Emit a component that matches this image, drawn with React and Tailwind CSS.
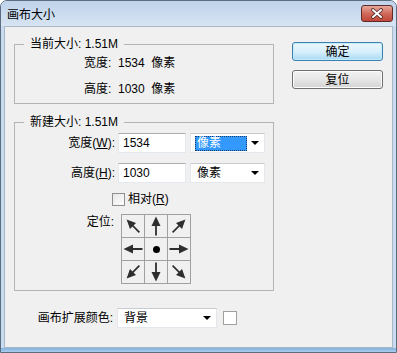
import React from 'react';

const font = { fontFamily: '"Liberation Sans", "Noto Sans CJK SC", sans-serif' };

// arrow pointing right, rotated for each cell
const Arrow = ({ angle, diag }) => (
  <svg width="22" height="22" viewBox="0 0 22 22">
    <g transform={`rotate(${angle} 11 11)${diag ? ' translate(11 11) scale(0.95) translate(-11 -11)' : ''}`}>
      <line x1="1.5" y1="11" x2="13" y2="11" stroke="#2e2e2e" strokeWidth="1.8" />
      <polygon points="11,6.5 20.5,11 11,15.5" fill="#2e2e2e" />
    </g>
  </svg>
);

const anchors = [
  { angle: 225, diag: true },
  { angle: 270 },
  { angle: 315, diag: true },
  { angle: 180 },
  null,
  { angle: 0 },
  { angle: 135, diag: true },
  { angle: 90 },
  { angle: 45, diag: true },
];

const Dropdown = ({ label, selected, width }) => (
  <div className={`${width} h-[20px] bg-white border border-[#e3e6ea] border-t-[#c8cbd0] flex items-center pl-[4px] pr-[4px]`}>
    {selected ? (
      <span className="h-[15px] w-[52px] bg-[#3399ff] text-white border border-dotted border-[#1a3d66] leading-[13px] pl-[1px]">{label}</span>
    ) : (
      <span className="leading-[15px] pl-[2px]">{label}</span>
    )}
    <span className="ml-auto w-0 h-0 border-l-[4px] border-r-[4px] border-t-[4px] border-l-transparent border-r-transparent border-t-black mr-[1px]" />
  </div>
);

const TextBox = ({ value }) => (
  <div className="w-[68px] h-[20px] bg-white border border-[#e3e9ef] border-t-[#abadb3] flex items-center pl-[4px] leading-[16px]">
    {value}
  </div>
);

export default function App() {
  return (
    <div style={font} className="w-[397px] h-[353px] text-[12px] text-black bg-[#c9dbef] border border-[#5d6d80] rounded-t-[7px] flex flex-col overflow-hidden">
      {/* title bar */}
      <div className="h-[25px] flex items-start bg-linear-to-b from-[#bfd3eb] to-[#d7e4f3]">
        <span className="ml-[6px] mt-[7px] leading-[14px] text-[12px]">画布大小</span>
        <div className="ml-auto mr-[3px] mt-[4px] w-[32px] h-[17px] rounded-[3px] border border-[#5e2b27] bg-linear-to-b from-[#e6a89d] via-[#d06a5c] to-[#c1463a] flex items-center justify-center">
          <svg width="14" height="11" viewBox="0 0 14 11">
            <path d="M3 2 L11 9 M11 2 L3 9" stroke="#4a2522" strokeWidth="3.6" strokeLinecap="round" />
            <path d="M3 2 L11 9 M11 2 L3 9" stroke="#ffffff" strokeWidth="2" strokeLinecap="round" />
          </svg>
        </div>
      </div>

      {/* client area */}
      <div className="mx-[3px] h-[322px] bg-[#f0f0f0] border border-[#a9b8c9] flex">
        <div className="pl-[9px] pt-[9px] w-[270px]">
          <fieldset className="w-[260px] border border-[#b4b4b4] pb-[6px]">
            <legend className="ml-[9px] px-[6px] leading-[16px]">当前大小: 1.51M</legend>
            <div className="pl-[69px] mt-[3px] leading-[16px]">宽度:&nbsp; 1534&nbsp; 像素</div>
            <div className="pl-[69px] mt-[10px] leading-[16px]">高度:&nbsp; 1030&nbsp; 像素</div>
          </fieldset>

          <fieldset className="w-[260px] mt-[10px] border border-[#b4b4b4] pb-[6px]">
            <legend className="ml-[9px] px-[6px] leading-[16px]">新建大小: 1.51M</legend>
            <div className="flex items-center mt-[3px]">
              <span className="w-[100px] text-right">宽度(<u>W</u>):</span>
              <div className="ml-[3px]"><TextBox value="1534" /></div>
              <div className="ml-[4px]"><Dropdown label="像素" selected width="w-[75px]" /></div>
            </div>
            <div className="flex items-center mt-[10px]">
              <span className="w-[100px] text-right">高度(<u>H</u>):</span>
              <div className="ml-[3px]"><TextBox value="1030" /></div>
              <div className="ml-[4px]"><Dropdown label="像素" width="w-[75px]" /></div>
            </div>
            <div className="flex items-center mt-[10px] pl-[97px] h-[13px]">
              <span className="w-[13px] h-[13px] border border-[#8e8f8f] bg-linear-to-br from-[#e6e6e6] to-[#ffffff]" />
              <span className="ml-[3px] leading-[13px]">相对(<u>R</u>)</span>
            </div>
            <div className="flex items-start mt-[8px]">
              <span className="w-[99px] text-right leading-[16px]">定位:</span>
              <div className="ml-[7px] grid grid-cols-3 gap-px bg-[#a0a0a0] border border-[#a0a0a0]">
                {anchors.map((a, i) => (
                  <div key={i} className="w-[22px] h-[22px] bg-[#f0f0f0] flex items-center justify-center">
                    {a ? <Arrow angle={a.angle} diag={a.diag} /> : <span className="w-[7px] h-[7px] rounded-full bg-black" />}
                  </div>
                ))}
              </div>
            </div>
          </fieldset>

          <div className="flex items-center mt-[17px]">
            <span className="w-[99px] text-right">画布扩展颜色:</span>
            <div className="ml-[4px]"><Dropdown label="背景" width="w-[100px]" /></div>
            <span className="ml-[6px] w-[14px] h-[14px] bg-white border border-[#a0a0a0]" />
          </div>
        </div>

        <div className="ml-[17px] pt-[15px] flex flex-col gap-[9px]">
          <div className="w-[91px] h-[19px] rounded-[3px] border border-[#3c7fb1] bg-linear-to-b from-[#eaf6fd] via-[#d9f0fc] to-[#a7d9f5] shadow-[inset_0_0_0_1px_#c5ecfc] flex items-center justify-center leading-[14px]">
            确定
          </div>
          <div className="w-[91px] h-[19px] rounded-[3px] border border-[#707070] bg-linear-to-b from-[#f2f2f2] via-[#e6e6e6] to-[#d3d3d3] shadow-[inset_0_0_0_1px_#fcfcfc] flex items-center justify-center leading-[14px]">
            复位
          </div>
        </div>
      </div>

      <div className="flex-1 bg-linear-to-b from-[#7fb1dd] to-[#a9cdec]" />
    </div>
  );
}
